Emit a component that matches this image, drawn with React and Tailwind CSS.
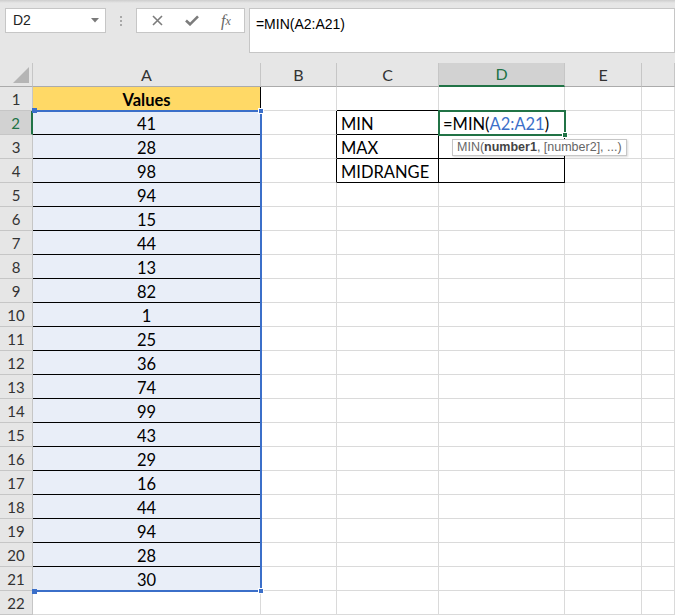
import { useState } from "react";

const VALUES = [41, 28, 98, 94, 15, 44, 13, 82, 1, 25, 36, 74, 99, 43, 29, 16, 44, 94, 28, 30];
const COLUMNS = ["A", "B", "C", "D", "E", ""];
const LABELS = { 2: "MIN", 3: "MAX", 4: "MIDRANGE" };

// border + fill for every data cell
function cellClass(row, col) {
  if (col === 0) {
    if (row === 1)
      return "bg-[#ffd966] border-r border-b border-r-black border-b-[#dadada] justify-center font-bold";
    if (row <= 21)
      return "bg-[#e9eef8] border-r border-b border-r-[#dadada] border-b-black justify-center";
  }
  if (col === 1 && row >= 2 && row <= 4)
    return "bg-white border-r border-b border-r-black border-b-[#dadada]";
  if ((col === 2 || col === 3) && row === 1)
    return "bg-white border-r border-b border-r-[#dadada] border-b-black";
  if ((col === 2 || col === 3) && row >= 2 && row <= 4)
    return "bg-white border-r border-b border-black pl-[4px]";
  return "bg-white border-r border-b border-[#dadada]";
}

function cellText(row, col) {
  if (col === 0) return row === 1 ? "Values" : VALUES[row - 2];
  if (col === 2) return LABELS[row];
  if (col === 3 && row === 2)
    return (
      <span>
        =MIN(<span className="text-[#3b6fc9]">A2:A21</span>)
      </span>
    );
  return null;
}

function Toolbar() {
  return (
    <div className="relative h-[63px] flex items-start pt-[8px] font-['Liberation_Sans',sans-serif]">
      <div className="absolute top-0 left-0 right-0 h-[3px] bg-linear-to-b from-[#cdcdcd] to-[#e6e6e6]" />
      <div className="ml-[5px] w-[102px] h-[25px] bg-white border border-[#c6c6c6] flex items-center justify-between pl-[7px] pr-[6px] text-[14px] text-[#222]">
        <span>D2</span>
        <svg width="8" height="5" viewBox="0 0 8 5">
          <polygon points="0,0 8,0 4,4.5" fill="#7a7a7a" />
        </svg>
      </div>
      <div className="w-[30px] h-[25px] flex flex-col items-center justify-center gap-[2px]">
        <span className="w-[2px] h-[2px] bg-[#a8a8a8]" />
        <span className="w-[2px] h-[2px] bg-[#a8a8a8]" />
        <span className="w-[2px] h-[2px] bg-[#a8a8a8]" />
      </div>
      <div className="w-[110px] h-[25px] bg-white border border-[#c6c6c6] flex items-center">
        <div className="w-[38px] flex justify-center pl-[4px]">
          <svg width="11" height="11" viewBox="0 0 11 11">
            <path d="M1 1 L10 10 M10 1 L1 10" stroke="#7c7c7c" strokeWidth="1.6" />
          </svg>
        </div>
        <div className="w-[34px] flex justify-center">
          <svg width="14" height="11" viewBox="0 0 14 11">
            <path d="M1 5.5 L5 9.3 L13 1.3" stroke="#7c7c7c" strokeWidth="2.6" fill="none" />
          </svg>
        </div>
        <div className="w-[34px] flex justify-center font-['Liberation_Serif',serif] italic text-[#666] text-[16px] leading-none">
          f<span className="text-[12px] relative top-[2px]">x</span>
        </div>
      </div>
      <div className="ml-[4px] w-[430px] h-[45px] bg-white border border-[#c6c6c6] pl-[6px] pt-[5px] text-[14px] text-black">
        =MIN(A2:A21)
      </div>
    </div>
  );
}

function Sheet() {
  const [active] = useState({ row: 2, col: 3 });
  const rows = Array.from({ length: 22 }, (_, i) => i + 1);

  return (
    <div className="relative grid grid-cols-[33px_228px_76px_102px_126px_77px_1fr] grid-rows-[repeat(23,24px)] font-['Lato',sans-serif]">
      {/* header row */}
      <div className="bg-[#e6e6e6] border-r border-b border-r-[#c6c6c6] border-b-[#ababab] flex items-end justify-end p-[3px]">
        <svg width="16" height="16" viewBox="0 0 16 16">
          <polygon points="16,0 16,16 0,16" fill="#b5b5b5" />
        </svg>
      </div>
      {COLUMNS.map((name, c) =>
        c === active.col ? (
          <div
            key={c}
            className="bg-[#d2d2d2] border-r border-r-[#c6c6c6] border-b-2 border-b-[#217346] flex items-center justify-center text-[16px] text-[#217346]"
          >
            {name}
          </div>
        ) : (
          <div
            key={c}
            className="bg-[#e6e6e6] border-r border-b border-r-[#c6c6c6] border-b-[#ababab] flex items-center justify-center text-[16px] text-[#333]"
          >
            {name}
          </div>
        )
      )}

      {rows.map((row) => [
        row === active.row ? (
          <div
            key={`h${row}`}
            className="bg-[#d2d2d2] border-b border-b-[#c6c6c6] border-r-2 border-r-[#217346] flex items-center justify-center pt-[1px] text-[15px] text-[#217346]"
          >
            {row}
          </div>
        ) : (
          <div
            key={`h${row}`}
            className="bg-[#e6e6e6] border-r border-b border-[#c6c6c6] flex items-center justify-center pt-[1px] text-[15px] text-[#333]"
          >
            {row}
          </div>
        ),
        ...COLUMNS.map((_, c) => (
          <div
            key={`${row}-${c}`}
            className={`flex items-center pt-[3px] text-[16.5px] text-black whitespace-nowrap ${cellClass(row, c)}`}
          >
            {cellText(row, c)}
          </div>
        )),
      ])}

      {/* A2:A21 range highlight */}
      <div className="absolute left-[33px] top-[47px] w-[229px] h-[482px] border-t-2 border-r-2 border-b-2 border-[#3b6fc9] pointer-events-none">
        <span className="absolute -left-[1px] -top-[4px] w-[5px] h-[5px] bg-[#3b6fc9]" />
        <span className="absolute -right-[4px] -top-[4px] w-[6px] h-[6px] bg-[#3b6fc9] border border-white" />
        <span className="absolute -left-[1px] -bottom-[4px] w-[5px] h-[5px] bg-[#3b6fc9]" />
        <span className="absolute -right-[4px] -bottom-[4px] w-[6px] h-[6px] bg-[#3b6fc9] border border-white" />
      </div>

      {/* active cell D2 */}
      <div className="absolute left-[438px] top-[47px] w-[128px] h-[26px] border-2 border-[#217346] pointer-events-none">
        <span className="absolute -right-[4px] -bottom-[4px] w-[6px] h-[6px] bg-[#217346] border border-white" />
      </div>

      {/* function tooltip */}
      <div className="absolute left-[452px] top-[76px] h-[17px] px-[4px] bg-white border border-[#c6c6c6] shadow-[1px_1px_2px_rgba(0,0,0,0.15)] flex items-center text-[12.5px] text-[#666] font-['Liberation_Sans',sans-serif] whitespace-nowrap">
        MIN(<span className="font-bold text-[#444]">number1</span>, [number2], ...)
      </div>
    </div>
  );
}

export default function App() {
  return (
    <div className="w-[675px] h-[615px] overflow-hidden bg-[#e6e6e6]">
      <Toolbar />
      <Sheet />
    </div>
  );
}
